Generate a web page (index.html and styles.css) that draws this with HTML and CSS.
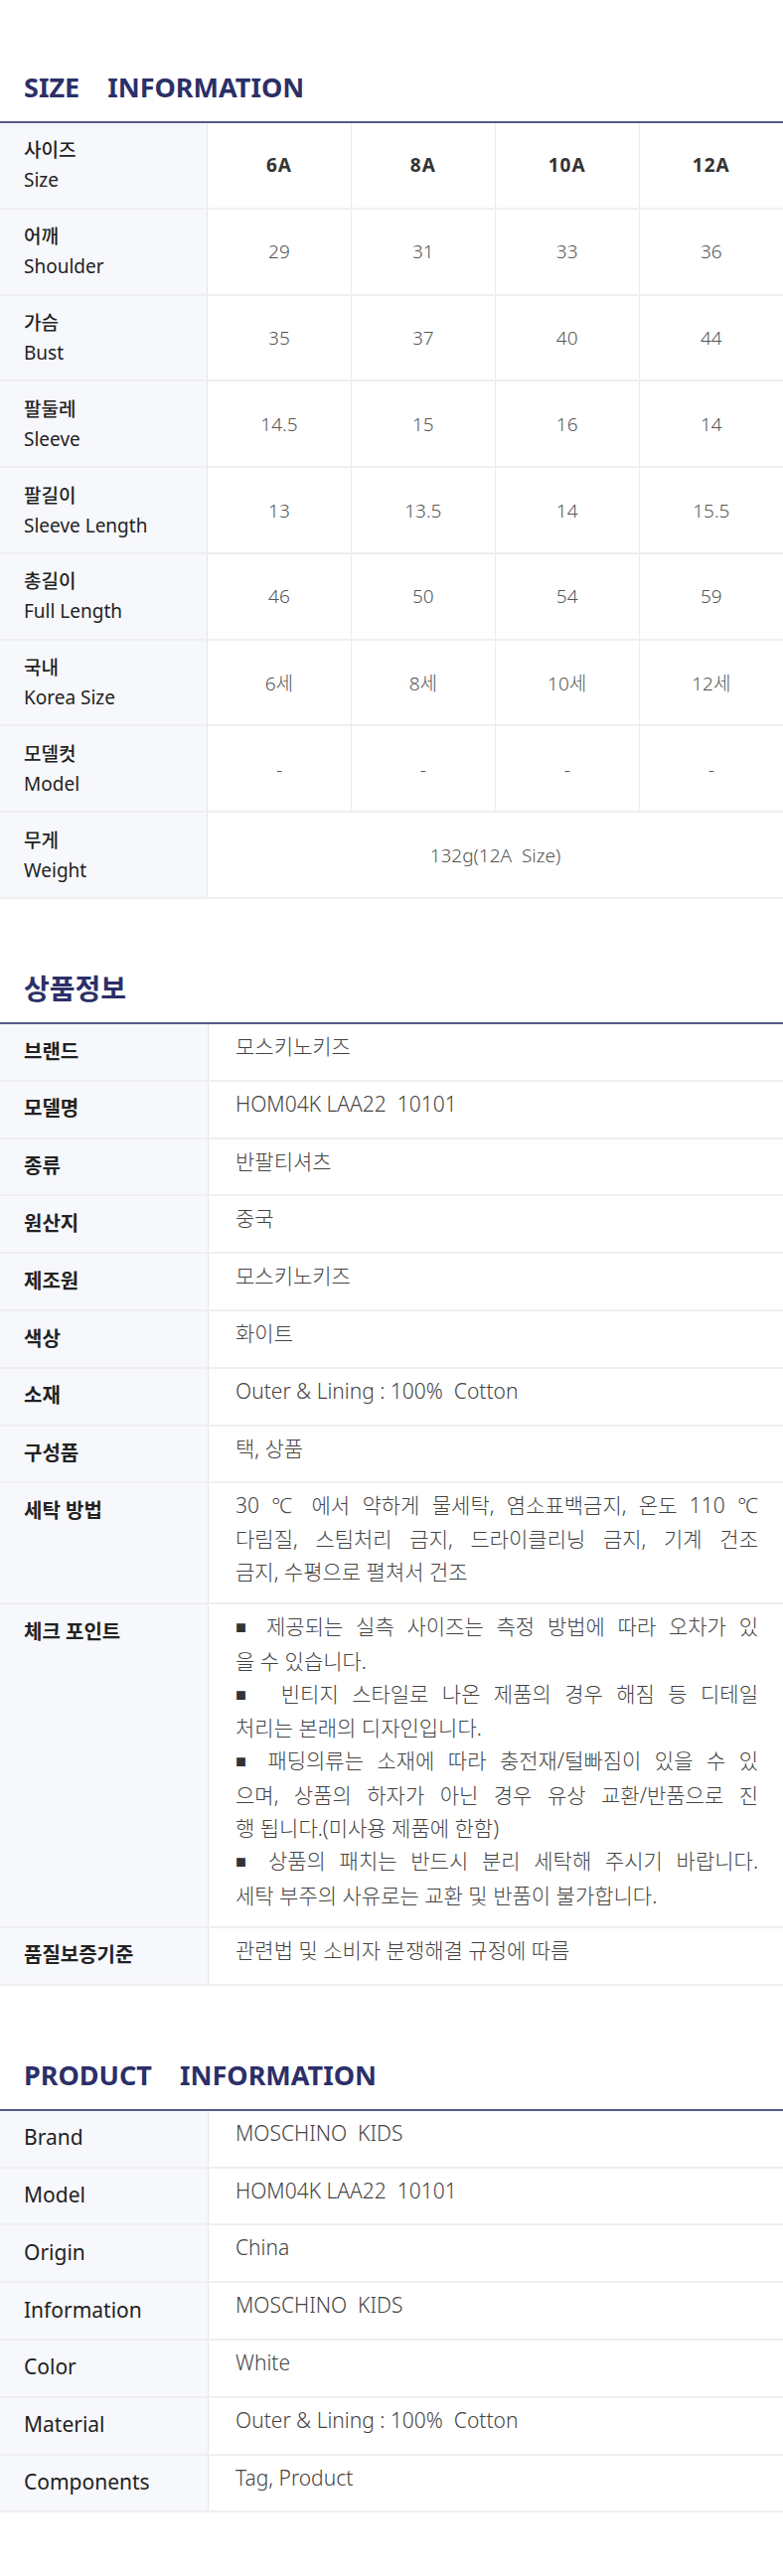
FILE: index.html
```html
<!DOCTYPE html>
<html>
	<head>
		<title>Size / Product Information</title>
		<meta charset="UTF-8" />
		<link rel="stylesheet" href="styles.css">
	</head>
	<body>
		<div class="block first">
			<h2 class="title">SIZE&nbsp;&nbsp;&nbsp; INFORMATION</h2>
			<table class="size">
				<tr class="head">
					<th><span class="ko">사이즈</span><span class="en">Size</span></th>
					<td>6A</td><td>8A</td><td>10A</td><td>12A</td>
				</tr>
				<tr>
					<th><span class="ko">어깨</span><span class="en">Shoulder</span></th>
					<td>29</td><td>31</td><td>33</td><td>36</td>
				</tr>
				<tr>
					<th><span class="ko">가슴</span><span class="en">Bust</span></th>
					<td>35</td><td>37</td><td>40</td><td>44</td>
				</tr>
				<tr>
					<th><span class="ko">팔둘레</span><span class="en">Sleeve</span></th>
					<td>14.5</td><td>15</td><td>16</td><td>14</td>
				</tr>
				<tr>
					<th><span class="ko">팔길이</span><span class="en">Sleeve Length</span></th>
					<td>13</td><td>13.5</td><td>14</td><td>15.5</td>
				</tr>
				<tr>
					<th><span class="ko">총길이</span><span class="en">Full Length</span></th>
					<td>46</td><td>50</td><td>54</td><td>59</td>
				</tr>
				<tr>
					<th><span class="ko">국내</span><span class="en">Korea Size</span></th>
					<td>6세</td><td>8세</td><td>10세</td><td>12세</td>
				</tr>
				<tr>
					<th><span class="ko">모델컷</span><span class="en">Model</span></th>
					<td>-</td><td>-</td><td>-</td><td>-</td>
				</tr>
				<tr>
					<th><span class="ko">무게</span><span class="en">Weight</span></th>
					<td colspan="4">132g(12A&nbsp; Size)</td>
				</tr>
			</table>
		</div>

		<div class="block">
			<h2 class="title ko-title">상품정보</h2>
			<table class="info">
				<tr><th>브랜드</th><td>모스키노키즈</td></tr>
				<tr><th>모델명</th><td>HOM04K LAA22&nbsp; 10101</td></tr>
				<tr><th>종류</th><td>반팔티셔츠</td></tr>
				<tr><th>원산지</th><td>중국</td></tr>
				<tr><th>제조원</th><td>모스키노키즈</td></tr>
				<tr><th>색상</th><td>화이트</td></tr>
				<tr><th>소재</th><td>Outer &amp; Lining : 100%&nbsp; Cotton</td></tr>
				<tr><th>구성품</th><td>택, 상품</td></tr>
				<tr>
					<th>세탁 방법</th>
					<td>
						<span class="ln fill">30 ℃ 에서 약하게 물세탁, 염소표백금지, 온도 110 ℃</span>
						<span class="ln fill">다림질, 스팀처리 금지, 드라이클리닝 금지, 기계 건조</span>
						<span class="ln">금지, 수평으로 펼쳐서 건조</span>
					</td>
				</tr>
				<tr>
					<th>체크 포인트</th>
					<td>
						<span class="ln fill"><span class="sq">■</span> 제공되는 실측 사이즈는 측정 방법에 따라 오차가 있</span>
						<span class="ln">을 수 있습니다.</span>
						<span class="ln fill"><span class="sq">■</span>&nbsp; 빈티지 스타일로 나온 제품의 경우 해짐 등 디테일</span>
						<span class="ln">처리는 본래의 디자인입니다.</span>
						<span class="ln fill"><span class="sq">■</span> 패딩의류는 소재에 따라 충전재/털빠짐이 있을 수 있</span>
						<span class="ln fill">으며, 상품의 하자가 아닌 경우 유상 교환/반품으로 진</span>
						<span class="ln">행 됩니다.(미사용 제품에 한함)</span>
						<span class="ln fill"><span class="sq">■</span> 상품의 패치는 반드시 분리 세탁해 주시기 바랍니다.</span>
						<span class="ln">세탁 부주의 사유로는 교환 및 반품이 불가합니다.</span>
					</td>
				</tr>
				<tr><th>품질보증기준</th><td>관련법 및 소비자 분쟁해결 규정에 따름</td></tr>
			</table>
		</div>

		<div class="block">
			<h2 class="title">PRODUCT&nbsp;&nbsp;&nbsp; INFORMATION</h2>
			<table class="info en-info">
				<tr><th>Brand</th><td>MOSCHINO&nbsp; KIDS</td></tr>
				<tr><th>Model</th><td>HOM04K LAA22&nbsp; 10101</td></tr>
				<tr><th>Origin</th><td>China</td></tr>
				<tr><th>Information</th><td>MOSCHINO&nbsp; KIDS</td></tr>
				<tr><th>Color</th><td>White</td></tr>
				<tr><th>Material</th><td>Outer &amp; Lining : 100%&nbsp; Cotton</td></tr>
				<tr><th>Components</th><td>Tag, Product</td></tr>
			</table>
		</div>
	</body>
</html>
```

FILE: styles.css
```css
body {
	margin: 0;
	font-family: "Noto Sans", "Noto Sans CJK KR", sans-serif;
	color: #222;
	background: #fff;
}

.block {
	padding-top: 70px;
}

.block.first {
	padding-top: 68px;
}

.title {
	margin: 0 0 14px;
	padding-left: 24px;
	font-size: 27px;
	line-height: 40px;
	font-weight: bold;
	color: #2c2f68;
}

.ko-title {
	font-size: 28px;
}

table {
	width: 100%;
	border-collapse: collapse;
	table-layout: fixed;
	border-top: 2px solid #575a86;
}

th {
	background: #f7f8fc;
	border-right: 1px solid #e3e5ee;
	border-bottom: 2px solid #efeff2;
	text-align: left;
	font-weight: normal;
	color: #222;
}

td {
	border-bottom: 2px solid #efeff2;
}

/* size table */

.size th {
	width: 184px;
	padding: 12.4px 0 12.4px 24px;
	line-height: 30px;
}

.size .ko {
	display: block;
	font-size: 19px;
	font-weight: 500;
}

.size .en {
	display: block;
	font-size: 19px;
}

.size td {
	border-left: 1px solid #ececf0;
	text-align: center;
	font-size: 19px;
	font-weight: 300;
	color: #555;
}

.size .head td {
	font-weight: bold;
	color: #333;
	letter-spacing: 1px;
}

/* info tables */

.info th {
	width: 185px;
	padding: 10.5px 0 12px 24px;
	vertical-align: top;
	font-size: 20px;
	font-weight: bold;
	line-height: 33.3px;
}

.info td {
	padding: 6px 25px 14px 27px;
	vertical-align: top;
	font-size: 21px;
	font-weight: 300;
	line-height: 33.3px;
	color: #444;
}

.en-info th {
	font-size: 21px;
	font-weight: normal;
}

.ln {
	display: block;
}

.fill {
	text-align: justify;
	text-align-last: justify;
}

.sq {
	font-size: 11px;
	color: #333;
	vertical-align: 2px;
}
```
